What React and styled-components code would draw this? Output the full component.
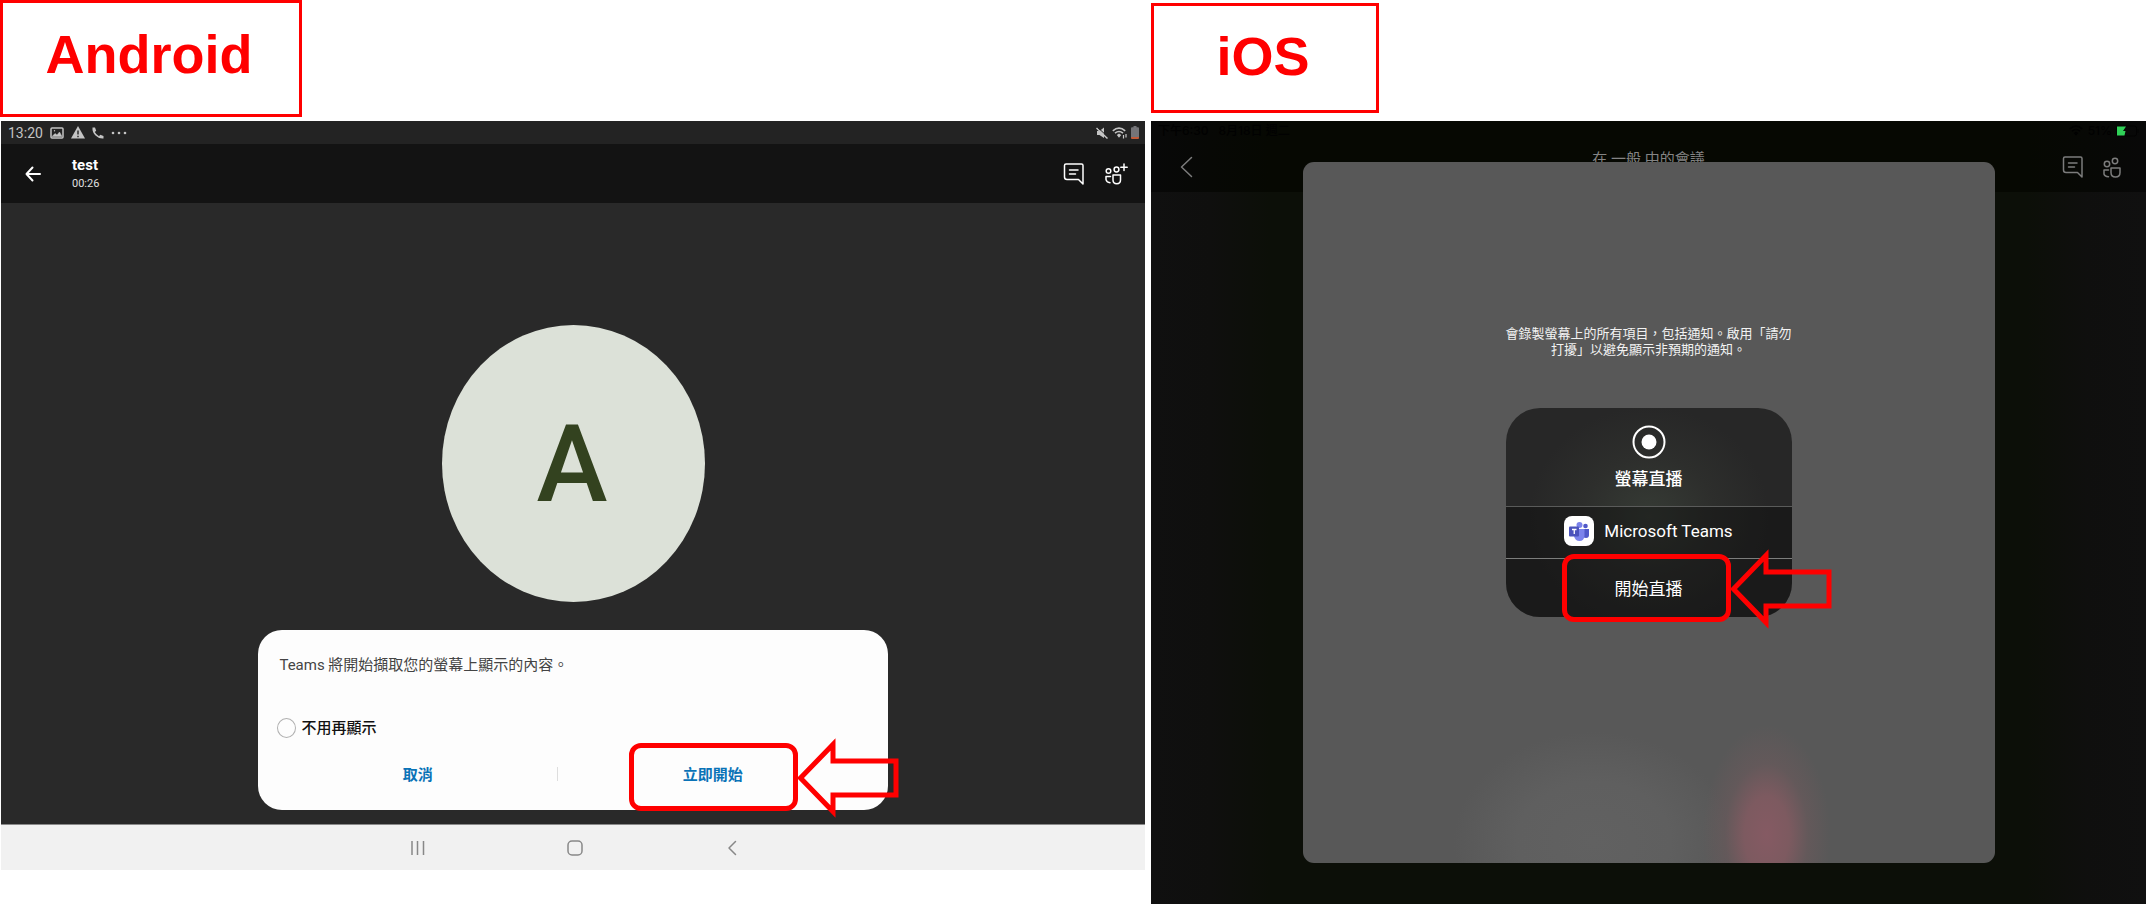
import React from "react";
import styled, { createGlobalStyle } from "styled-components";

const RED = "#ff0000";

const GlobalStyle = createGlobalStyle`
  * { box-sizing: border-box; }
  body {
    margin: 0;
    background: #fff;
    font-family: Roboto, "Noto Sans CJK TC", sans-serif;
  }
  button { font: inherit; border: 0; background: none; padding: 0; margin: 0; cursor: pointer; }
  h1, h2, h3, p { margin: 0; }
  svg { display: block; flex: none; }
`;

/* ---------- page ---------- */

const Page = styled.main`
  display: grid;
  grid-template-columns: 1146fr 995fr;
  column-gap: 5px;
  align-items: start;
`;

const Column = styled.section`
  display: flex;
  flex-direction: column;
  min-width: 0;
`;

const LabelArea = styled.div`
  height: 121px;
  padding-top: ${(p) => p.$top}px;
`;

const PlatformLabel = styled.h1`
  display: flex;
  align-items: center;
  justify-content: center;
  width: ${(p) => p.$width}px;
  height: ${(p) => p.$height}px;
  padding: 0 4px ${(p) => p.$lift}px 0;
  border: 3px solid ${RED};
  color: ${RED};
  font: bold 54px/54px "Liberation Sans", Arial, sans-serif;
`;

/* ---------- call-out marks ---------- */

const Highlight = styled.span`
  position: absolute;
  top: -5px;
  bottom: -5px;
  left: 50%;
  width: 169px;
  margin-left: -${(p) => p.$shift}px;
  border: 5px solid ${RED};
  border-radius: 12px;
  pointer-events: none;
`;

const ArrowSvg = styled.svg`
  position: absolute;
  left: calc(100% + 3px);
  top: -10px;
`;

function Callout({ shift }) {
  return (
    <Highlight $shift={shift} aria-hidden="true">
      <ArrowSvg width="104" height="80" viewBox="0 0 104 80">
        <path
          d="M4.500 40 37 6.500V23H100V57H37V73.500Z"
          fill="none"
          stroke={RED}
          strokeWidth="5"
          strokeMiterlimit="10"
        />
      </ArrowSvg>
    </Highlight>
  );
}

/* ---------- android ---------- */

const AndroidScreen = styled.div`
  margin: 0 1px;
  background: #292929;
`;

const AndroidStatus = styled.div`
  display: flex;
  align-items: center;
  justify-content: space-between;
  height: 23px;
  padding: 0 6px 0 7px;
  background: #232323;
  color: #c4c4c4;
  font-size: 14px;
  line-height: 22px;
`;

const StatusGroup = styled.div`
  display: flex;
  align-items: center;
  gap: ${(p) => p.$gap}px;
`;

const AndroidBar = styled.header`
  display: flex;
  align-items: center;
  height: 59px;
  padding: 0 17px 0 23px;
  background: #131313;
  color: #fff;
`;

const IconButton = styled.button`
  display: flex;
  color: inherit;
`;

const CallInfo = styled.div`
  display: flex;
  flex-direction: column;
  flex: 1;
  margin-left: 30px;
`;

const CallTitle = styled.h2`
  font-size: 15px;
  line-height: 20px;
  font-weight: 700;
`;

const CallTime = styled.span`
  font-size: 11px;
  line-height: 18px;
  color: #e0e0e0;
`;

const BarActions = styled.div`
  display: flex;
  align-items: center;
  gap: ${(p) => p.$gap}px;
`;

const Stage = styled.div`
  display: flex;
  flex-direction: column;
  align-items: center;
  gap: 28px;
  padding: 122px 0 14px;
  border-bottom: 1px solid #8a8a8a;
`;

const Avatar = styled.div`
  display: flex;
  align-items: center;
  justify-content: center;
  width: 263px;
  height: 277px;
  padding: 2px 2px 0 0;
  border-radius: 50%;
  background: #dce1d8;
  color: #33421f;
  font-size: 107px;
  font-weight: 500;
`;

const Dialog = styled.div`
  display: flex;
  flex-direction: column;
  width: 55%;
  height: 180px;
  padding: 23px 20px 4px;
  border-radius: 24px;
  background: #fdfdfd;
`;

const DialogText = styled.p`
  font-size: 15px;
  line-height: 24px;
  color: #444;
  padding-left: 1px;
`;

const CheckLabel = styled.label`
  display: flex;
  align-items: center;
  gap: 5px;
  margin-top: 39px;
  font-size: 15px;
  line-height: 24px;
  font-weight: 500;
  color: #111;
`;

const RoundCheck = styled.input`
  appearance: none;
  width: 19px;
  height: 20px;
  margin: 0 0 0 -1px;
  border: 1px solid #b0b0b0;
  border-radius: 50%;
`;

const DialogActions = styled.div`
  display: grid;
  grid-template-columns: 9fr 1px 10fr;
  align-items: center;
  margin-top: auto;
`;

const DialogButton = styled.button`
  position: relative;
  height: 58px;
  padding-bottom: 7px;
  font-size: 15px;
  font-weight: 700;
  color: #0a73b7;
`;

const Separator = styled.span`
  height: 14px;
  margin-bottom: 6px;
  background: #dedede;
`;

const NavBar = styled.nav`
  display: flex;
  align-items: center;
  justify-content: center;
  gap: 141px;
  height: 45px;
  padding-left: 3px;
  background: #f1f1f1;
  color: #888;
`;

/* ---------- ios ---------- */

const IosScreen = styled.div`
  display: flex;
  flex-direction: column;
  align-items: center;
  padding-bottom: 41px;
  background: linear-gradient(90deg, #101010 0%, #0f0f0e 6%, #0c0f08 12%, #0c0f08 88%, #0f0f0e 94%, #101010 100%);
`;

const IosHeader = styled.header`
  align-self: stretch;
  height: 71px;
  background: linear-gradient(90deg, #080808 0%, #060802 12%, #060802 88%, #080808 100%);
  color: #7c7c7c;
`;

const IosStatus = styled.div`
  display: flex;
  align-items: center;
  justify-content: space-between;
  height: 20px;
  padding: 0 6px 0 7px;
  color: #010101;
  font: 500 12px/20px Inter, "Noto Sans CJK TC", sans-serif;
`;

const IosBar = styled.div`
  display: grid;
  grid-template-columns: 1fr auto 1fr;
  height: 51px;
  padding: 0 24px;
`;

const BarSide = styled.div`
  display: flex;
  height: 51px;
  align-items: center;
  justify-content: ${(p) => (p.$end ? "flex-end" : "flex-start")};
  gap: 18px;
  padding-left: 5px;
`;

const MeetingTitle = styled.h2`
  padding-top: 8px;
  font-size: 15px;
  line-height: 20px;
  font-weight: 400;
  color: #848484;
`;

const Sheet = styled.div`
  position: relative;
  display: flex;
  flex-direction: column;
  align-items: center;
  gap: 50px;
  width: calc(100% - 303px);
  margin-top: -30px;
  padding: 164px 0 246px;
  border-radius: 11px;
  background:
    radial-gradient(ellipse 64px 110px at 67% 96%, #855a63 0%, #7d5a60 35%, rgba(104, 89, 91, 0.7) 65%, rgba(88, 88, 88, 0) 100%),
    radial-gradient(ellipse 140px 110px at 42% 97%, #616161 0%, #5f5f5f 55%, rgba(88, 88, 88, 0) 100%),
    #585858;
`;

const Note = styled.p`
  font-size: 13px;
  line-height: 16px;
  color: #f2f2f2;
  text-align: center;
`;

const Panel = styled.div`
  width: 286px;
  border-radius: 34px;
  background: radial-gradient(ellipse 120px 110px at 50% 52%, #363b35 0%, #2d2e2c 55%, #272727 100%);
  color: #fff;
`;

const PanelHead = styled.div`
  display: flex;
  flex-direction: column;
  align-items: center;
  gap: 8px;
  height: 98px;
  padding-top: 17px;
`;

const PanelTitle = styled.h3`
  font-size: 17px;
  line-height: 24px;
  font-weight: 500;
`;

const PanelRow = styled.div`
  display: flex;
  align-items: center;
  justify-content: center;
  gap: 10px;
  height: 53px;
  padding-bottom: 3px;
  border-top: 1px solid #5a5b5a;
  border-bottom: 1px solid #7c7d7c;
  background: rgba(10, 10, 10, 0.42);
  font-size: 17px;
  line-height: 24px;
`;

const StartButton = styled.button`
  position: relative;
  display: block;
  width: 100%;
  height: 58px;
  padding-bottom: 2px;
  border-radius: 0 0 34px 34px;
  background: rgba(10, 10, 10, 0.42);
  color: #fff;
  font-size: 17px;
`;

/* ---------- icons ---------- */

const line = { fill: "none", stroke: "currentColor", strokeLinecap: "round", strokeLinejoin: "round" };

const ChatIcon = () => (
  <svg width="22" height="24" viewBox="0 0 22 24" {...line} strokeWidth="1.500">
    <path d="M3 2H18.500Q20 2 20 3.500V22L15.500 17.500H4Q1.500 17.500 1.500 15V3.500Q1.500 2 3 2Z" />
    <path d="M6.500 8H15M6.500 12H12.500" />
  </svg>
);

const AddPeopleIcon = () => (
  <svg width="24" height="24" viewBox="0 0 24 24" {...line} strokeWidth="1.500">
    <circle cx="4.500" cy="9" r="2.300" />
    <circle cx="12.500" cy="7.500" r="2.400" />
    <path d="M6.500 14.500H2V17.500Q2.500 20.500 6 20.700" />
    <path d="M9 13H16.500V18Q16.500 21.700 12.800 21.700Q9 21.700 9 18Z" />
    <path d="M20 2V8.500M16.800 5.200H23.200" />
  </svg>
);

const PeopleIcon = () => (
  <svg width="20" height="24" viewBox="0 0 20 24" {...line} strokeWidth="1.500">
    <circle cx="5" cy="9" r="2.700" />
    <circle cx="13" cy="6" r="2.700" />
    <path d="M6.500 15H2V19Q2.500 21.500 6.500 21.700" />
    <path d="M9 13H18V17.500Q18 22 13.500 22Q9 22 9 17.500Z" />
  </svg>
);

const BackArrow = () => (
  <svg width="18" height="18" viewBox="0 0 18 18" {...line} strokeWidth="2">
    <path d="M16 9H2.500M8.500 2.500 2.500 9 8.500 15.500" />
  </svg>
);

const ImageIcon = () => (
  <svg width="14" height="12" viewBox="0 0 14 12" fill="none" stroke="currentColor" strokeWidth="1.500">
    <rect x="1" y="1" width="12" height="10" rx="1" />
    <path d="M2 9.500 5 6.500 7 8 9.500 5 12 9.500Z" fill="currentColor" strokeWidth="0.500" />
    <circle cx="4.500" cy="3.800" r="0.700" fill="currentColor" stroke="none" />
  </svg>
);

const WarningIcon = () => (
  <svg width="14" height="13" viewBox="0 0 14 13">
    <path d="M7 0 14 12.500H0Z" fill="currentColor" />
    <path d="M7 4.500V8.500M7 9.800V11.300" stroke="#232323" strokeWidth="1.400" />
  </svg>
);

const PhoneIcon = () => (
  <svg width="12" height="12" viewBox="0 0 12 12" fill="currentColor">
    <path d="M0.500 0.500H3L4.200 3.700 2.800 5Q4.200 7.800 7 9.200L8.300 7.800 11.500 9V11.500Q7 12 3.500 8.500Q0 5 0.500 0.500Z" />
  </svg>
);

const DotsIcon = () => (
  <svg width="16" height="4" viewBox="0 0 16 4" fill="currentColor">
    <circle cx="2" cy="2" r="1.300" />
    <circle cx="8" cy="2" r="1.300" />
    <circle cx="14" cy="2" r="1.300" />
  </svg>
);

const MuteIcon = () => (
  <svg width="12" height="12" viewBox="0 0 12 12">
    <path d="M1 4H3.500L8 0.500V11L3.500 8H1Z" fill="currentColor" />
    <path d="M0.500 1 11.500 11.500" stroke="currentColor" strokeWidth="1.500" />
    <path d="M1.800 0.500 12 10" stroke="#232323" />
  </svg>
);

const WifiIcon = ({ arrows }) => (
  <svg width="15" height="12" viewBox="0 0 15 12" fill="none" stroke="currentColor" strokeWidth="1.600">
    <path d="M0.800 3.800Q7 -1.500 13.200 3.800M3 6.200Q7 2.800 11 6.200" />
    <path d="M4.800 8 7 6.600 9.200 8 7 10.800Z" fill="currentColor" stroke="none" />
    {arrows && <path d="M11.500 8V11.500M14 7V10.500" strokeWidth="1.200" />}
  </svg>
);

const BatteryIcon = () => (
  <svg width="8" height="13" viewBox="0 0 8 13">
    <path d="M2.500 0H5.500V1.200H7Q8 1.200 8 2.200V11H0V2.200Q0 1.200 1 1.200H2.500Z" fill="#747478" />
    <path d="M0 11H8V12Q8 13 7 13H1Q0 13 0 12Z" fill="#c05a38" />
  </svg>
);

const IosBatteryIcon = () => (
  <svg width="24" height="12" viewBox="0 0 24 12">
    <rect x="0.500" y="1" width="20" height="10" rx="2" fill="none" stroke="#020202" />
    <path d="M1 1.500H10L7 6H9.500L8.500 10.500H1Z" fill="#30d158" />
    <path d="M22 4V8" stroke="#020202" />
  </svg>
);

const ChevronIcon = () => (
  <svg width="13" height="22" viewBox="0 0 13 22" {...line} strokeWidth="1.500">
    <path d="M11.500 1.500 1.500 11 11.500 20.500" />
  </svg>
);

const RecentsIcon = () => (
  <svg width="16" height="16" viewBox="0 0 16 16" stroke="currentColor" strokeWidth="1.500">
    <path d="M2 1V15M7.500 1V15M13.500 1V15" />
  </svg>
);

const HomeIcon = () => (
  <svg width="16" height="16" viewBox="0 0 16 16" fill="none" stroke="currentColor" strokeWidth="1.500">
    <rect x="1" y="1" width="14" height="14" rx="4" />
  </svg>
);

const NavBackIcon = () => (
  <svg width="16" height="16" viewBox="0 0 16 16" {...line} strokeWidth="1.500">
    <path d="M11.500 1.500 5 8 11.500 14.500" />
  </svg>
);

const RecordIcon = () => (
  <svg width="34" height="34" viewBox="0 0 34 34">
    <circle cx="17" cy="17" r="15.500" fill="none" stroke="#fff" strokeWidth="2" />
    <circle cx="17" cy="17" r="7.500" fill="#fff" />
  </svg>
);

const TeamsIcon = () => (
  <svg width="30" height="30" viewBox="0 0 30 30">
    <rect width="30" height="30" rx="8" fill="#fff" />
    <circle cx="21.500" cy="10" r="2.300" fill="#5059c9" />
    <path d="M18 13H25V19Q25 22 22 22Q19 22 18 20Z" fill="#5059c9" />
    <circle cx="15.500" cy="9" r="3" fill="#7b83eb" />
    <path d="M10 13H20.500V20Q20 25 15.500 25Q11 25 10 20Z" fill="#7b83eb" />
    <rect x="5" y="10.500" width="10" height="10" rx="1" fill="#4b53bc" />
    <path d="M8 13.500H12.500M10.250 13.500V18" stroke="#fff" strokeWidth="1.300" />
  </svg>
);

/* ---------- screens ---------- */

function AndroidPanel() {
  return (
    <Column>
      <LabelArea $top={0}>
        <PlatformLabel $width={302} $height={117} $lift={10}>Android</PlatformLabel>
      </LabelArea>
      <AndroidScreen>
        <AndroidStatus>
          <StatusGroup $gap={7}>
            <span>13:20</span>
            <ImageIcon />
            <WarningIcon />
            <PhoneIcon />
            <DotsIcon />
          </StatusGroup>
          <StatusGroup $gap={4}>
            <MuteIcon />
            <WifiIcon arrows />
            <BatteryIcon />
          </StatusGroup>
        </AndroidStatus>
        <AndroidBar>
          <IconButton aria-label="返回"><BackArrow /></IconButton>
          <CallInfo>
            <CallTitle>test</CallTitle>
            <CallTime>00:26</CallTime>
          </CallInfo>
          <BarActions $gap={19}>
            <IconButton aria-label="聊天"><ChatIcon /></IconButton>
            <IconButton aria-label="新增人員"><AddPeopleIcon /></IconButton>
          </BarActions>
        </AndroidBar>
        <Stage>
          <Avatar>A</Avatar>
          <Dialog>
            <DialogText>Teams 將開始擷取您的螢幕上顯示的內容。</DialogText>
            <CheckLabel htmlFor="skip-prompt">
              <RoundCheck id="skip-prompt" type="checkbox" />
              不用再顯示
            </CheckLabel>
            <DialogActions>
              <DialogButton>取消</DialogButton>
              <Separator />
              <DialogButton>
                立即開始
                <Callout shift={84} />
              </DialogButton>
            </DialogActions>
          </Dialog>
        </Stage>
        <NavBar>
          <IconButton aria-label="最近使用"><RecentsIcon /></IconButton>
          <IconButton aria-label="首頁"><HomeIcon /></IconButton>
          <IconButton aria-label="上一頁"><NavBackIcon /></IconButton>
        </NavBar>
      </AndroidScreen>
    </Column>
  );
}

function IosPanel() {
  return (
    <Column>
      <LabelArea $top={3}>
        <PlatformLabel $width={228} $height={110} $lift={4}>iOS</PlatformLabel>
      </LabelArea>
      <IosScreen>
        <IosHeader>
          <IosStatus>
            <StatusGroup $gap={10}>
              <span>下午6:30</span>
              <span>8月18日 週二</span>
            </StatusGroup>
            <StatusGroup $gap={4}>
              <WifiIcon />
              <span>51%</span>
              <IosBatteryIcon />
            </StatusGroup>
          </IosStatus>
          <IosBar>
            <BarSide>
              <IconButton aria-label="返回"><ChevronIcon /></IconButton>
            </BarSide>
            <MeetingTitle>在 一般 中的會議</MeetingTitle>
            <BarSide $end>
              <IconButton aria-label="聊天"><ChatIcon /></IconButton>
              <IconButton aria-label="人員"><PeopleIcon /></IconButton>
            </BarSide>
          </IosBar>
        </IosHeader>
        <Sheet>
          <Note>
            會錄製螢幕上的所有項目，包括通知。啟用「請勿
            <br />
            打擾」以避免顯示非預期的通知。
          </Note>
          <Panel>
            <PanelHead>
              <RecordIcon />
              <PanelTitle>螢幕直播</PanelTitle>
            </PanelHead>
            <PanelRow>
              <TeamsIcon />
              <span>Microsoft Teams</span>
            </PanelRow>
            <StartButton>
              開始直播
              <Callout shift={87} />
            </StartButton>
          </Panel>
        </Sheet>
      </IosScreen>
    </Column>
  );
}

export default function App() {
  return (
    <>
      <GlobalStyle />
      <Page>
        <AndroidPanel />
        <IosPanel />
      </Page>
    </>
  );
}
